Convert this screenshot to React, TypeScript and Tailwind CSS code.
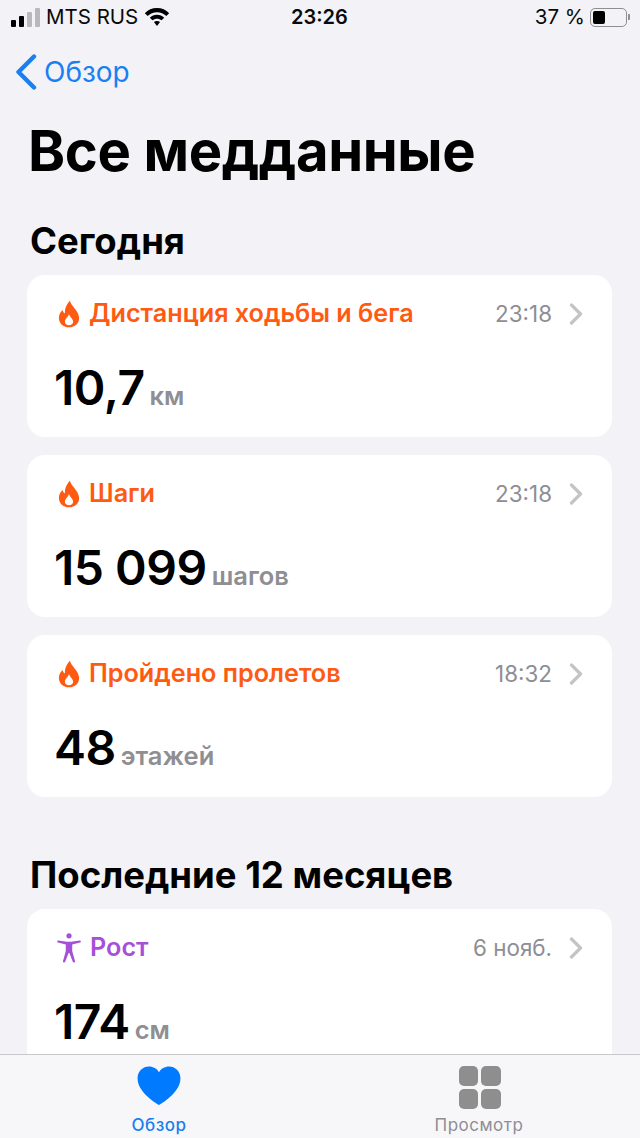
const FONT = "font-['Inter','Liberation_Sans',sans-serif]";

const todayItems = [
  { title: 'Дистанция ходьбы и бега', time: '23:18', value: '10,7', unit: 'км' },
  { title: 'Шаги', time: '23:18', value: '15 099', unit: 'шагов' },
  { title: 'Пройдено пролетов', time: '18:32', value: '48', unit: 'этажей' },
];

function Flame() {
  return (
    <svg width="22" height="28" viewBox="0 0 24 30" className="ml-[3px] shrink-0">
      <path
        fillRule="evenodd"
        fill="#ff5a12"
        d="M13 .5C14 6 22 10.5 23 18.5C23.7 24.8 18.5 29.5 12 29.5C5.5 29.5 .6 24.8 1 18.5C1.3 15 3 12.4 5 10.5C5.5 12.5 6.3 13.6 7.6 14.2C7.2 9 9.5 4 13 .5ZM12 15C10.8 18.5 7.5 20.5 7.5 23.5C7.5 26 9.6 27.2 12 27.2C14.4 27.2 16.5 26 16.5 23.5C16.5 20.5 13.2 18.5 12 15Z"
      />
    </svg>
  );
}

function Figure() {
  return (
    <svg width="24" height="30" viewBox="0 0 24 30" className="ml-[2px] shrink-0">
      <circle cx="12" cy="2.8" r="2.6" fill="#a550d8" />
      <path fill="#a550d8" d="M1.2 7.4L10 8.8H14L22.8 7.4C24 7.2 24.3 9.2 23 9.5L15.2 11.4L15.2 18L18 28C18.4 29.6 16.4 30.2 15.8 28.8L12.4 20H11.6L8.2 28.8C7.6 30.2 5.6 29.6 6 28L8.8 18L8.8 11.4L1 9.5C-.3 9.2 0 7.2 1.2 7.4Z" />
    </svg>
  );
}

function Card({ icon, title, time, value, unit, color }: { icon: React.ReactNode; title: string; time: string; value: string; unit: string; color: string }) {
  return (
    <div className="ml-[27px] mr-[28px] h-[162px] shrink-0 rounded-[18px] bg-white px-[28px] pt-[21px]">
      <div className="flex h-[36px] items-center">
        {icon}
        <span className="ml-[9px] text-[25.2px] font-semibold" style={{ color }}>{title}</span>
        <span className="ml-auto text-[22.4px] text-[#8e8e93]">{time}</span>
        <svg width="14" height="22" viewBox="0 0 14 22" className="ml-[17px] mr-[1px] shrink-0">
          <path d="M2.5 2L11.5 11L2.5 20" fill="none" stroke="#c4c4c7" strokeWidth="3.2" strokeLinecap="round" strokeLinejoin="round" />
        </svg>
      </div>
      <div className="mt-[26px] ml-[-1px] flex items-baseline">
        <span className="text-[48px] leading-[60px] font-semibold tracking-[-0.5px] text-black">{value}</span>
        <span className="ml-[5px] text-[25.5px] font-semibold text-[#8e8e93]">{unit}</span>
      </div>
    </div>
  );
}

export default function App() {
  return (
    <div className={`${FONT} relative flex h-[1138px] w-[640px] flex-col overflow-hidden bg-[#f2f2f7]`}>
      {/* status bar */}
      <div className="relative flex h-[34px] shrink-0 items-center pl-[11px] pr-[10px] text-[20.5px] text-[#0a0a0a]">
        <div className="flex items-end gap-[3px]">
          <div className="h-[7px] w-[5px] rounded-[1px] bg-black" />
          <div className="h-[11px] w-[5px] rounded-[1px] bg-black" />
          <div className="h-[15px] w-[5px] rounded-[1px] bg-[#b9b9bd]" />
          <div className="h-[19px] w-[5px] rounded-[1px] bg-[#b9b9bd]" />
        </div>
        <span className="ml-[6px]">MTS RUS</span>
        <svg width="26" height="19" viewBox="0 0 26 20" className="ml-[6px]">
          <path fill="#000" d="M13 0C18 0 22.6 2 25.8 5.4L22.8 8.4C20.2 5.8 16.9 4.4 13 4.4C9.1 4.4 5.8 5.8 3.2 8.4L.2 5.4C3.4 2 8 0 13 0ZM13 7C16 7 18.6 8.2 20.6 10.2L17.8 13C16.4 11.8 14.8 11.2 13 11.2C11.2 11.2 9.6 11.8 8.2 13L5.4 10.2C7.4 8.2 10 7 13 7ZM13 13.6C14.2 13.6 15.3 14 16.2 14.8L13 19L9.8 14.8C10.7 14 11.8 13.6 13 13.6Z" />
        </svg>
        <span className="absolute left-[291px] text-[20px] font-semibold">23:26</span>
        <span className="ml-auto">37 %</span>
        <div className="ml-[5px] flex items-center">
          <div className="flex h-[19px] w-[37px] items-center rounded-[5px] border-[1.5px] border-[#8f8f93] p-[2px]">
            <div className="h-full w-[12px] rounded-[2px] bg-black" />
          </div>
          <div className="ml-[1px] h-[6px] w-[2px] rounded-r-[1px] bg-[#8f8f93]" />
        </div>
      </div>

      {/* nav */}
      <div className="mt-[17px] flex h-[42px] shrink-0 items-center pl-[15px] text-[#1a7ff0]">
        <svg width="22" height="36" viewBox="0 0 22 36" className="shrink-0">
          <path d="M19 2.5L3.5 18L19 33.5" fill="none" stroke="#1a7ff0" strokeWidth="4.4" strokeLinecap="round" strokeLinejoin="round" />
        </svg>
        <span className="ml-[7px] text-[28px]">Обзор</span>
      </div>

      <h1 className="mt-[23px] h-[70px] shrink-0 pl-[28px] text-[56.2px] leading-[70px] font-bold tracking-[-0.4px] text-black">Все медданные</h1>

      <h2 className="mt-[33px] h-[44px] shrink-0 pl-[30px] text-[36.5px] leading-[44px] font-bold text-black">Сегодня</h2>

      <div className="mt-[12px] flex shrink-0 flex-col gap-[18px]">
        {todayItems.map((item) => (
          <Card key={item.title} icon={<Flame />} color="#ff5a12" {...item} />
        ))}
      </div>

      <h2 className="mt-[56px] h-[44px] shrink-0 pl-[30px] text-[36.5px] leading-[44px] font-bold text-black">Последние 12 месяцев</h2>

      <div className="mt-[12px]">
        <Card icon={<Figure />} color="#a550d8" title="Рост" time="6 нояб." value="174" unit="см" />
      </div>

      {/* tab bar */}
      <div className="absolute bottom-0 left-0 flex h-[84px] w-full border-t-[1.5px] border-[#c8c8cc] bg-[#f7f7f9]">
        <div className="flex w-[318px] flex-col items-center pt-[11px]">
          <svg width="44" height="40" viewBox="0 0 46 42">
            <path fill="#007aff" d="M23 41C21.5 40 0.5 28 0.5 13C0.5 5.5 6 0.5 12.5 0.5C17 0.5 20.8 2.8 23 6.5C25.2 2.8 29 0.5 33.5 0.5C40 0.5 45.5 5.5 45.5 13C45.5 28 24.5 40 23 41Z" />
          </svg>
          <span className="mt-[9px] text-[17px] leading-[20px] font-medium tracking-[0.5px] text-[#1a7ff0]">Обзор</span>
        </div>
        <div className="flex w-[322px] flex-col items-center pt-[11px]">
          <div className="ml-[1px] grid grid-cols-2 gap-x-[3px] gap-y-[3px]">
            <div className="h-[20px] w-[19.5px] rounded-[5px] bg-[#8e8e8e]" />
            <div className="h-[20px] w-[19.5px] rounded-[5px] bg-[#8e8e8e]" />
            <div className="h-[20px] w-[19.5px] rounded-[5px] bg-[#8e8e8e]" />
            <div className="h-[20px] w-[19.5px] rounded-[5px] bg-[#8e8e8e]" />
          </div>
          <span className="mt-[6px] text-[17px] leading-[20px] tracking-[0.5px] text-[#8e8e93]">Просмотр</span>
        </div>
      </div>
    </div>
  );
}
